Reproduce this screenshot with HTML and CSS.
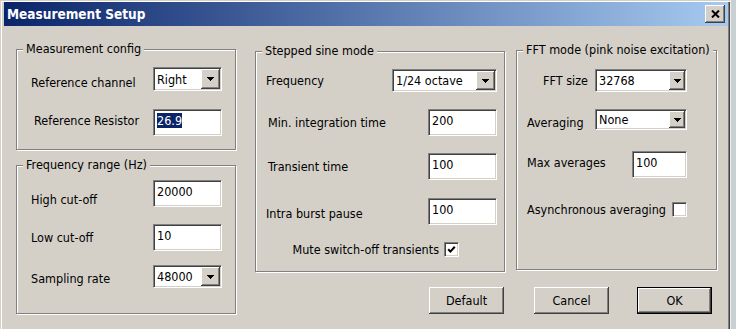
FILE: index.html
```html
<!DOCTYPE html>
<html lang="en">
<head>
<meta charset="utf-8">
<title>Measurement Setup</title>
<link rel="stylesheet" href="styles.css">
</head>
<body>
<div class="screen">
  <div class="window">
    <div class="titlebar">
      <span class="title">Measurement Setup</span>
      <button class="close" aria-label="Close">
        <svg width="9" height="8" viewBox="0 0 9 8"><path d="M1 0.5 L8 7.5 M8 0.5 L1 7.5" stroke="#000" stroke-width="2" fill="none"/></svg>
      </button>
    </div>
    <div class="content">
      <div class="col-left">
        <section class="group g1">
          <div class="legend">Measurement config</div>
          <div class="row r17 h24">
            <span class="lbl dn3">Reference channel</span>
            <div class="combo w69 push">
              <span class="val">Right</span>
              <span class="drop"><svg width="7" height="4" viewBox="0 0 7 4"><polygon points="0,0 7,0 3.5,4" fill="#000"/></svg></span>
            </div>
          </div>
          <div class="row r18">
            <span class="lbl in3 up3">Reference Resistor</span>
            <div class="edit w69 push"><span class="sel">26.9</span></div>
          </div>
        </section>
        <section class="group g2">
          <div class="legend">Frequency range (Hz)</div>
          <div class="row r13">
            <span class="lbl dn6">High cut-off</span>
            <div class="edit w69 push">20000</div>
          </div>
          <div class="row r17">
            <span class="lbl">Low cut-off</span>
            <div class="edit w69 push">10</div>
          </div>
          <div class="row r14">
            <span class="lbl dn1">Sampling rate</span>
            <div class="combo w69 push">
              <span class="val">48000</span>
              <span class="drop"><svg width="7" height="4" viewBox="0 0 7 4"><polygon points="0,0 7,0 3.5,4" fill="#000"/></svg></span>
            </div>
          </div>
        </section>
      </div>
      <div class="col-right">
        <div class="groups">
          <section class="group g3">
            <div class="legend">Stepped sine mode</div>
            <div class="row r17">
              <span class="lbl">Frequency</span>
              <div class="combo w105 push">
                <span class="val">1/24 octave</span>
                <span class="drop"><svg width="7" height="4" viewBox="0 0 7 4"><polygon points="0,0 7,0 3.5,4" fill="#000"/></svg></span>
              </div>
            </div>
            <div class="row r17">
              <span class="lbl in2">Min. integration time</span>
              <div class="edit w69 push">200</div>
            </div>
            <div class="row r17">
              <span class="lbl in2">Transient time</span>
              <div class="edit w69 push">100</div>
            </div>
            <div class="row r18">
              <span class="lbl dn1">Intra burst pause</span>
              <div class="edit w69 push">100</div>
            </div>
            <div class="row r17 end">
              <span class="lbl">Mute switch-off transients</span>
              <span class="check mute">
                <svg width="9" height="9" viewBox="0 0 9 9"><path d="M1.2 4.2 L3.4 6.6 L7.8 1.8" stroke="#000" stroke-width="2" fill="none"/></svg>
              </span>
            </div>
          </section>
          <section class="group g4">
            <div class="legend">FFT mode (pink noise excitation)</div>
            <div class="row r18 end">
              <span class="lbl gap7">FFT size</span>
              <div class="combo w92">
                <span class="val">32768</span>
                <span class="drop narrow"><svg width="7" height="4" viewBox="0 0 7 4"><polygon points="0,0 7,0 3.5,4" fill="#000"/></svg></span>
              </div>
            </div>
            <div class="row r17">
              <span class="lbl dn3">Averaging</span>
              <div class="combo w92 h21 push">
                <span class="val">None</span>
                <span class="drop narrow"><svg width="7" height="4" viewBox="0 0 7 4"><polygon points="0,0 7,0 3.5,4" fill="#000"/></svg></span>
              </div>
            </div>
            <div class="row r21">
              <span class="lbl up3">Max averages</span>
              <div class="edit w55 push">100</div>
            </div>
            <div class="row r24">
              <span class="lbl">Asynchronous averaging</span>
              <span class="check push"></span>
            </div>
          </section>
        </div>
        <div class="buttons">
          <button class="btn">Default</button>
          <button class="btn">Cancel</button>
          <button class="btn ok">OK</button>
        </div>
      </div>
    </div>
  </div>
  <div class="strip"></div>
</div>
</body>
</html>
```

FILE: styles.css
```css
* { box-sizing: border-box; }

html, body {
  margin: 0;
  padding: 0;
}

body {
  width: 736px;
  height: 329px;
  overflow: hidden;
  font-family: "DejaVu Sans Condensed", "DejaVu Sans", sans-serif;
  font-size: 12.5px;
  color: #000;
  background: #c8d0d4;
}

.screen {
  display: flex;
  height: 329px;
}

.window {
  width: 730px;
  flex: none;
  padding: 2px 2px 0 4px;
  background: #d4d0c8;
  box-shadow:
    inset 1px 1px 0 #d4d0c8,
    inset 2px 2px 0 #ffffff,
    inset -1px 0 0 #404040,
    inset -2px 0 0 #808080;
}

.strip {
  flex: 1;
  background: #c8d0d4;
  box-shadow: inset 1px 0 0 #eef0f0;
}

/* title bar */
.titlebar {
  height: 24px;
  display: flex;
  align-items: center;
  justify-content: space-between;
  padding: 0 3px;
  background: linear-gradient(to right, #0a246a, #a6caf0);
}

.title {
  color: #fff;
  font-weight: bold;
  font-size: 13.5px;
}

.close {
  width: 20px;
  height: 18px;
  padding: 0;
  border: none;
  background: #d4d0c8;
  display: flex;
  align-items: center;
  justify-content: center;
  box-shadow:
    inset -1px -1px 0 #404040,
    inset 1px 1px 0 #ffffff,
    inset -2px -2px 0 #808080;
}

/* layout */
.content {
  display: flex;
  padding: 23px 0 0 12px;
}

.col-left {
  width: 220px;
  display: flex;
  flex-direction: column;
  gap: 15px;
}

.col-right {
  margin-left: 19px;
  padding-top: 1px;
  display: flex;
  flex-direction: column;
}

.groups {
  display: flex;
  align-items: flex-start;
  gap: 11px;
}

/* group boxes */
.group {
  display: flex;
  flex-direction: column;
  border: 1px solid #808080;
  box-shadow: inset 1px 1px 0 #ffffff, 1px 1px 0 #ffffff;
}

.legend {
  align-self: flex-start;
  height: 14px;
  line-height: 14px;
  margin: -8px 0 -6px 0;
  padding: 0 3px;
  background: #d4d0c8;
  white-space: nowrap;
}

.g1, .g2 { padding-left: 14px; }
.g1 .legend, .g2 .legend { margin-left: -8px; }
.g3 .legend, .g4 .legend { margin-left: -4px; }

.g1 { padding-right: 13px; padding-bottom: 13px; }
.g2 { padding-right: 13px; padding-bottom: 25px; }
.g3 { width: 250px; margin-top: 1px; padding: 0 7px 14px 10px; }
.g4 { width: 201px; padding: 0 29px 52px 10px; }

/* rows */
.row {
  display: flex;
  align-items: center;
}

.row.end { justify-content: flex-end; }

.r13 { margin-top: 13px; }
.r14 { margin-top: 14px; }
.r17 { margin-top: 17px; }
.r18 { margin-top: 18px; }
.r21 { margin-top: 21px; }
.r24 { margin-top: 24px; }

.lbl { white-space: nowrap; }
.dn1 { margin-top: 3px; }
.dn3 { margin-top: 6px; }
.dn6 { margin-top: 13px; }
.up3 { margin-bottom: 5px; }
.in2 { margin-left: 2px; }
.in3 { margin-left: 3px; }
.gap7 { margin-right: 7px; }

.push { margin-left: auto; }

.w55 { width: 55px; }
.w69 { width: 69px; }
.w92 { width: 92px; }
.w105 { width: 105px; }

/* sunken edit */
.edit {
  height: 27px;
  background: #fff;
  border-style: solid;
  border-width: 1px;
  border-color: #808080 #ffffff #ffffff #808080;
  box-shadow: inset 1px 1px 0 #404040, inset -1px -1px 0 #d4d0c8;
  padding: 3px 3px 0 3px;
  line-height: 15px;
  white-space: nowrap;
}

.sel {
  background: #0a246a;
  color: #fff;
}

/* combo box */
.combo {
  height: 23px;
  display: flex;
  align-items: center;
  background: #fff;
  border-style: solid;
  border-width: 1px;
  border-color: #808080 #ffffff #ffffff #808080;
  box-shadow: inset 1px 1px 0 #404040, inset -1px -1px 0 #d4d0c8;
  padding: 1px 1px 1px 3px;
  white-space: nowrap;
}

.g1 .combo { height: 24px; }
.combo.h21 { height: 21px; }

.drop {
  margin-left: auto;
  align-self: stretch;
  width: 19px;
  display: flex;
  align-items: center;
  justify-content: center;
  background: #d4d0c8;
  box-shadow:
    inset -1px -1px 0 #404040,
    inset 1px 1px 0 #ffffff,
    inset -2px -2px 0 #808080;
}

.drop.narrow { width: 16px; }

.drop svg { shape-rendering: crispEdges; }

/* checkbox */
.check {
  width: 15px;
  height: 15px;
  display: flex;
  align-items: center;
  justify-content: center;
  background: #fff;
  border-style: solid;
  border-width: 1px;
  border-color: #808080 #ffffff #ffffff #808080;
  box-shadow: inset 1px 1px 0 #404040, inset -1px -1px 0 #d4d0c8;
}

.check.mute {
  margin-left: 5px;
  margin-right: 38px;
}

/* buttons */
.buttons {
  display: flex;
  justify-content: flex-end;
  gap: 30px;
  margin-top: 15px;
  padding-right: 5px;
}

.btn {
  width: 75px;
  height: 27px;
  padding: 0;
  font: inherit;
  color: #000;
  background: #d4d0c8;
  border: none;
  box-shadow:
    inset -1px -1px 0 #404040,
    inset 1px 1px 0 #ffffff,
    inset -2px -2px 0 #808080;
}

.btn.ok {
  margin-left: -2px;
  border: 1px solid #000;
}
```
